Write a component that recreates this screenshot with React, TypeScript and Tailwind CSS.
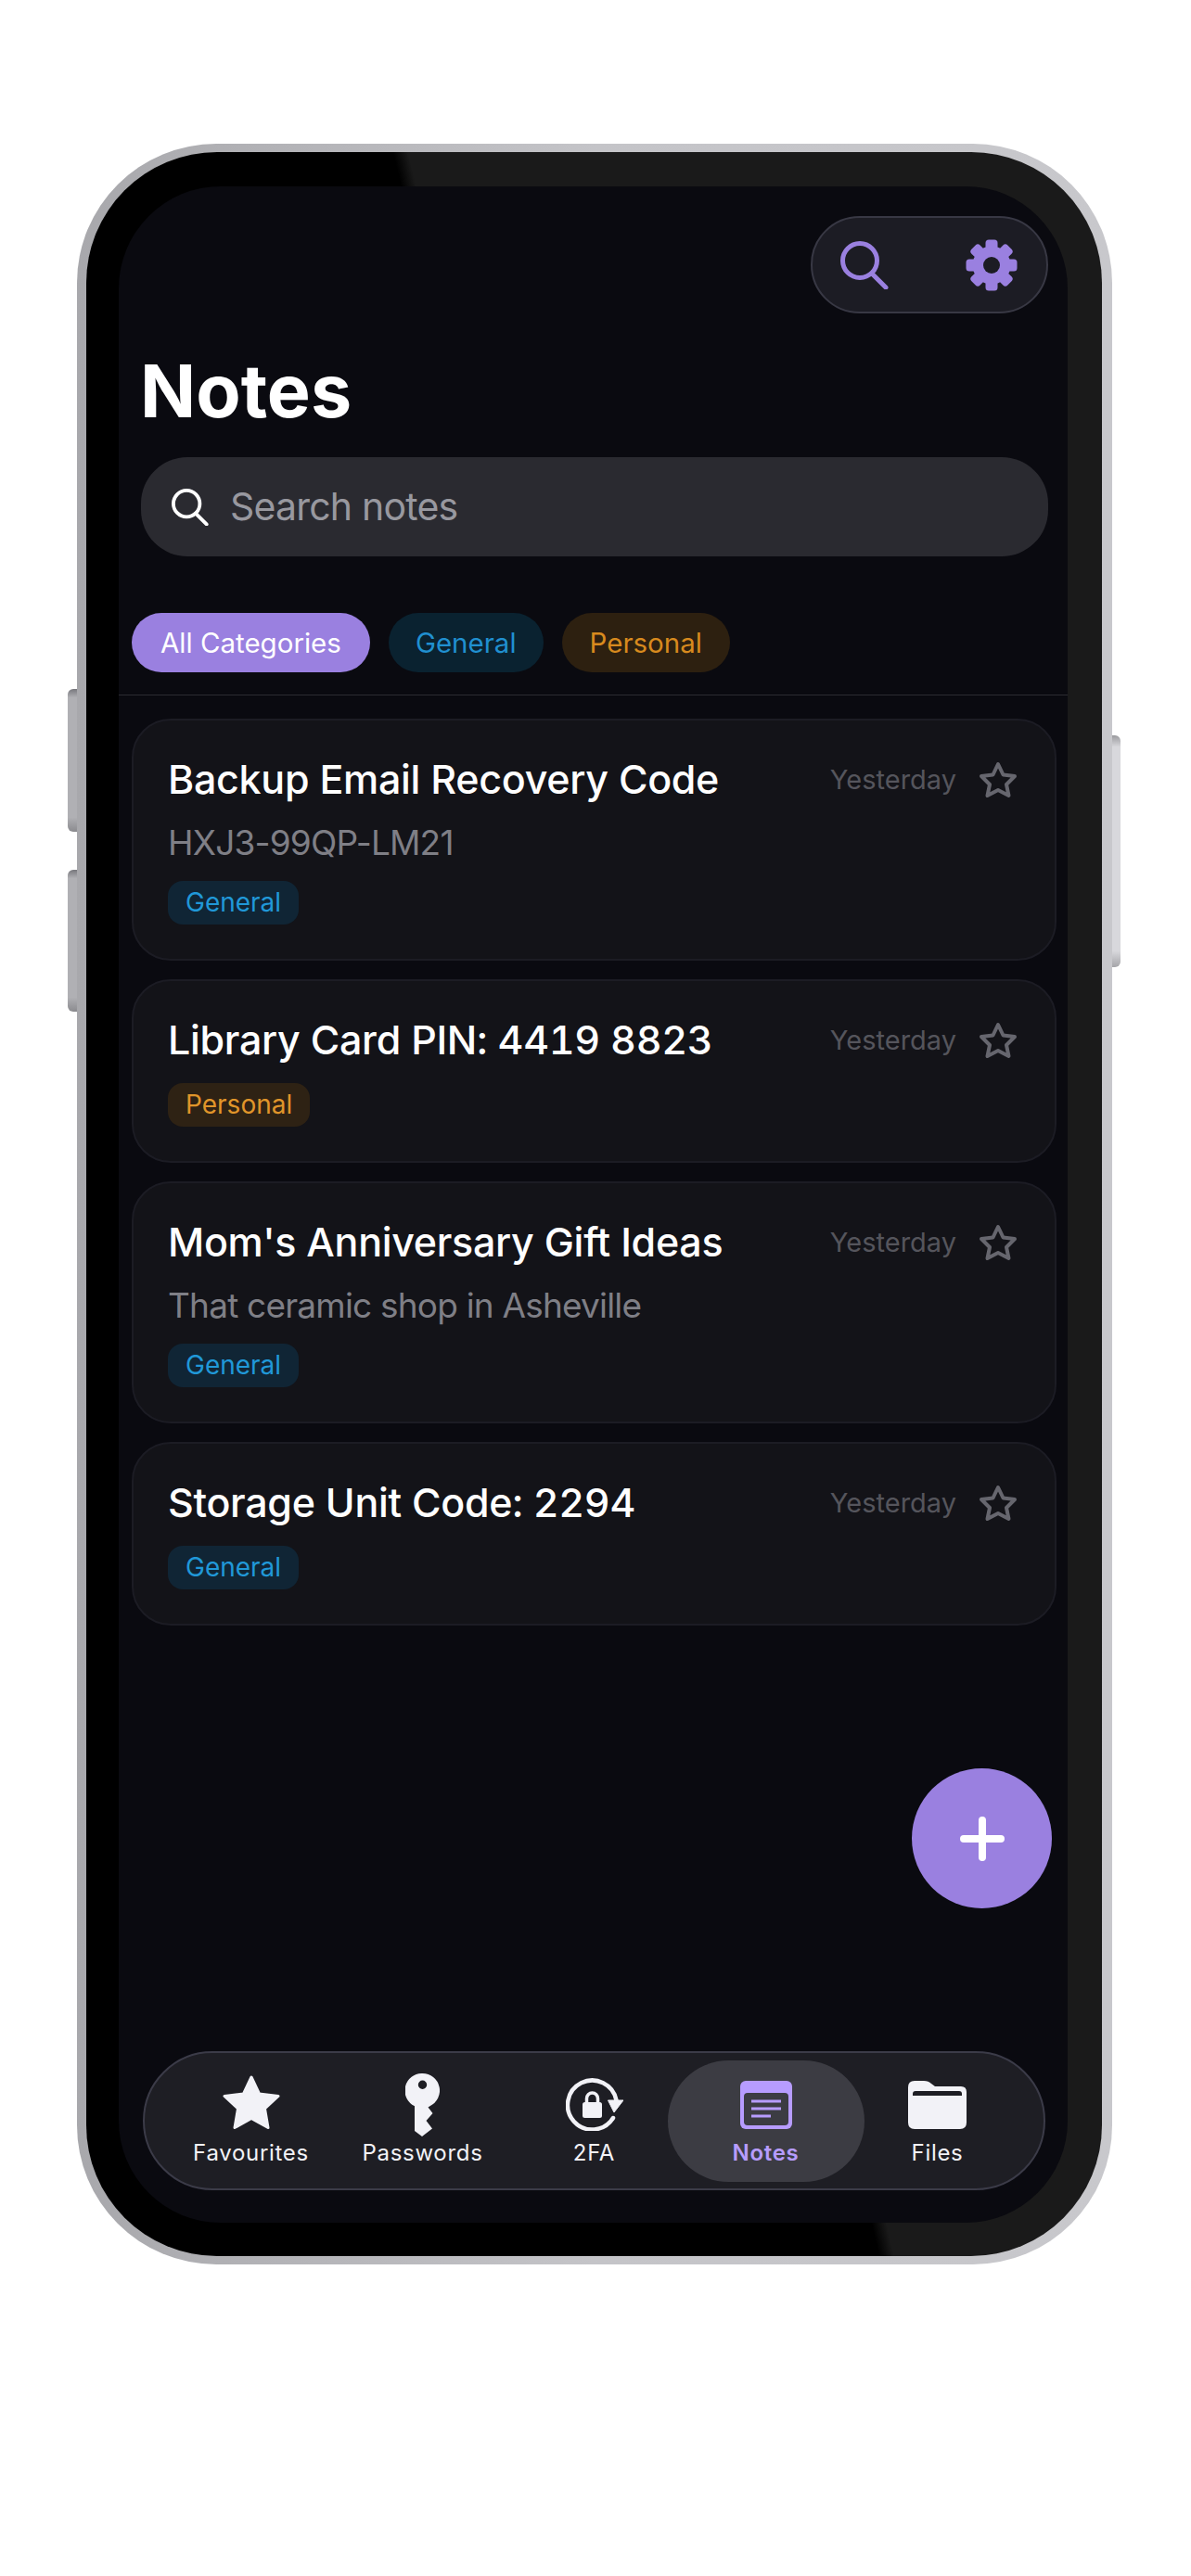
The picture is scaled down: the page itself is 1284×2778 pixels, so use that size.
const notes = [
  { title: "Backup Email Recovery Code", body: "HXJ3-99QP-LM21", tag: "General" },
  { title: "Library Card PIN: 4419 8823", tag: "Personal" },
  { title: "Mom's Anniversary Gift Ideas", body: "That ceramic shop in Asheville", tag: "General" },
  { title: "Storage Unit Code: 2294", tag: "General" },
];

function SearchIcon({ className }: { className: string }) {
  return (
    <svg viewBox="0 0 52 52" fill="none" stroke="currentColor" strokeWidth="5" strokeLinecap="round" className={className}>
      <circle cx="21" cy="21" r="18.5" />
      <path d="M34 35 49 50" />
    </svg>
  );
}

function GearIcon() {
  const angles = [0, 45, 90, 135, 180, 225, 270, 315];
  return (
    <svg viewBox="0 0 56 56" className="size-[56px] text-[#9a80e0]">
      {angles.map((a) => (
        <rect key={a} x="21.5" y="0.5" width="13" height="14" rx="3.5" fill="currentColor" transform={`rotate(${a} 28 28)`} />
      ))}
      <circle cx="28" cy="28" r="20.5" fill="currentColor" />
      <circle cx="28" cy="28" r="9" fill="#1c1c24" />
    </svg>
  );
}

function StarOutline() {
  return (
    <svg viewBox="0 0 42 40" fill="none" stroke="#66666e" strokeWidth="4" strokeLinejoin="round" className="w-[42px] h-[40px] shrink-0">
      <polygon points="21,3 26.5,14.5 39,16 30,25 32.5,37 21,31 9.5,37 12,25 3,16 15.5,14.5" />
    </svg>
  );
}

function StarIcon() {
  return (
    <svg viewBox="0 0 62 59" fill="#f2f2f7" stroke="#f2f2f7" strokeWidth="3" strokeLinejoin="round" className="w-[62px] h-[59px] -mt-[4px]">
      <polygon points="31,2 39.5,20 60,22.5 45.5,36 49,56.5 31,46.5 13,56.5 16.5,36 2,22.5 22.5,20" />
    </svg>
  );
}

function KeyIcon() {
  return (
    <svg viewBox="0 0 37 68" className="w-[37px] h-[68px]">
      <path
        fill="#f2f2f7"
        fillRule="evenodd"
        d="M18.5 0a18.5 18.5 0 0 1 8 35.2l-2 1.3 5 6.5-7 8 6.5 8.5L18 68l-8-6V35.2A18.5 18.5 0 0 1 18.5 0Zm0 7.5a4.7 4.7 0 1 0 0 9.4 4.7 4.7 0 0 0 0-9.4Z"
      />
    </svg>
  );
}

function TwoFaIcon() {
  return (
    <svg viewBox="0 0 62 57" className="w-[62px] h-[57px]">
      <path d="M51 43A26.5 26.5 0 1 1 54.5 24" fill="none" stroke="#f2f2f7" strokeWidth="4.5" strokeLinecap="round" />
      <path d="M45.5 24H62L52 37Z" fill="#f2f2f7" stroke="#f2f2f7" strokeLinejoin="round" />
      <path d="M22.5 27v-5a6 6 0 0 1 12 0v5" fill="none" stroke="#f2f2f7" strokeWidth="3.5" />
      <rect x="18" y="26" width="21" height="17" rx="2.5" fill="#f2f2f7" />
    </svg>
  );
}

function NotesIcon() {
  return (
    <svg viewBox="0 0 56 52" className="w-[56px] h-[52px]">
      <rect width="56" height="52" rx="6" fill="#b79cff" />
      <rect x="4" y="13" width="48" height="35" rx="4" fill="#3c3c43" />
      <path d="M12 22H44M12 30H44M12 38H33" stroke="#b79cff" strokeWidth="3" />
    </svg>
  );
}

function FilesIcon() {
  return (
    <svg viewBox="0 0 63 52" className="w-[63px] h-[52px]">
      <path fill="#f2f2f7" d="M0 7Q0 0 7 0H17Q22 0 25 3L29 6H57Q63 6 63 12V45Q63 52 56 52H7Q0 52 0 45Z" />
      <path fill="#1e1e24" d="M5 16V14Q5 11 8 11H55Q58 11 58 14V16Z" />
    </svg>
  );
}

const navItems = [
  { label: "Favourites", icon: <StarIcon /> },
  { label: "Passwords", icon: <KeyIcon /> },
  { label: "2FA", icon: <TwoFaIcon /> },
  { label: "Notes", icon: <NotesIcon />, active: true },
  { label: "Files", icon: <FilesIcon /> },
];

function NoteCard({ note }: { note: (typeof notes)[number] }) {
  const general = note.tag === "General";
  return (
    <div className="rounded-[42px] border-2 border-[#1c1c24] bg-[#131318] pt-[37px] pb-[37px] pl-[37px] pr-[40px]">
      <div className="flex items-center justify-between">
        <div className="text-[43px] leading-[52px] font-[550] tabular-nums tracking-[-0.3px] text-white">{note.title}</div>
        <div className="flex items-center gap-[24px] pt-[2px]">
          <span className="text-[29px] leading-[36px] text-[#55555c]">Yesterday</span>
          <StarOutline />
        </div>
      </div>
      {note.body && <div className="mt-[21px] text-[37px] leading-[44px] tracking-[-0.8px] text-[#7f7f86]">{note.body}</div>}
      <div
        className={`${note.body ? "mt-[19px]" : "mt-[21px]"} w-fit h-[47px] rounded-[16px] px-[19px] text-[28px] leading-[47px] ${
          general ? "bg-[#102535] text-[#2098d8]" : "bg-[#2e2214] text-[#e0952a]"
        }`}
      >
        {note.tag}
      </div>
    </div>
  );
}

export default function App() {
  return (
    <div className="h-[2778px] bg-white pt-[155px] pl-[83px] font-['Inter',sans-serif]">
      <div className="relative w-[1116px] h-[2287px]">
        <div className="absolute left-[-10px] top-[588px] w-[16px] h-[154px] rounded-l-[6px] bg-[linear-gradient(180deg,#77777c,#b0b0b4_6%,#b0b0b4_90%,#8a8a8e)]" />
        <div className="absolute left-[-10px] top-[783px] w-[16px] h-[153px] rounded-l-[6px] bg-[linear-gradient(180deg,#77777c,#b0b0b4_6%,#b0b0b4_90%,#8a8a8e)]" />
        <div className="absolute right-[-9px] top-[638px] w-[16px] h-[250px] rounded-r-[6px] bg-[linear-gradient(180deg,#9a9a9e,#d8d8dc_5%,#d8d8dc_93%,#a5a5a9)]" />

        <div className="relative h-full rounded-[150px] bg-[linear-gradient(90deg,#a8a8ac,#c4c4c8_50%,#c8c8cc)] pl-[10px] pr-[11px] py-[9px]">
          <div className="h-full rounded-[141px] bg-[linear-gradient(77deg,#000_52.8%,#1a1a1a_53.8%)] pl-[35px] pt-[37px] pr-[37px] pb-[36px]">
            <div className="relative flex h-full flex-col overflow-hidden rounded-[110px] bg-[#0a0a10]">
              <div className="flex justify-end pt-[32px] pr-[21px]">
                <div className="flex h-[105px] w-[256px] items-center justify-between rounded-full border-2 border-[#383844] bg-[#1c1c24] pl-[30px] pr-[31px] text-[#9a80e0]">
                  <SearchIcon className="size-[52px]" />
                  <GearIcon />
                </div>
              </div>

              <h1 className="mt-[35px] pl-[23px] text-[79px] leading-[97px] font-bold text-white">Notes</h1>

              <div className="mt-[23px] ml-[24px] mr-[21px] flex h-[107px] items-center rounded-[50px] bg-[#2a2a30] pl-[33px]">
                <SearchIcon className="size-[40px] text-white" />
                <span className="ml-[23px] text-[41px] tracking-[-0.8px] text-[#98989f]">Search notes</span>
              </div>

              <div className="mt-[61px] flex gap-[20px] pl-[14px]">
                <div className="flex h-[64px] items-center rounded-full bg-[#9a80e0] px-[31px] text-[29.5px] text-white">All Categories</div>
                <div className="flex h-[64px] items-center rounded-full bg-[#0a2230] px-[29px] text-[29.5px] text-[#2090d0]">General</div>
                <div className="flex h-[64px] items-center rounded-full bg-[#2d2010] px-[30px] text-[29.5px] text-[#d88a1e]">Personal</div>
              </div>

              <div className="mt-[24px] h-px bg-[#2c2c32]" />

              <div className="mt-[25px] ml-[14px] mr-[12px] flex flex-col gap-[20px]">
                {notes.map((note) => (
                  <NoteCard key={note.title} note={note} />
                ))}
              </div>

              <button className="absolute right-[17px] top-[1706px] flex size-[151px] items-center justify-center rounded-full bg-[#9a80e0]">
                <svg viewBox="0 0 48 48" stroke="white" strokeWidth="8" strokeLinecap="round" className="size-[48px]">
                  <path d="M24 4V44M4 24H44" />
                </svg>
              </button>

              <nav className="mt-auto mb-[35px] ml-[26px] flex h-[150px] w-[973px] items-center justify-center rounded-full border-2 border-[#3b3b48] bg-[#1e1e24]">
                {navItems.map((item) => (
                  <div key={item.label} className="flex w-[185px] justify-center">
                    <div
                      className={`flex h-[131px] w-[212px] shrink-0 flex-col items-center rounded-full pt-[13px] ${
                        item.active ? "bg-[#3c3c43] text-[#b79cff] font-semibold" : "text-[#f2f2f7] font-normal"
                      }`}
                    >
                      <div className="flex h-[70px] items-center justify-center">{item.icon}</div>
                      <span className="mt-[1px] text-[24px] leading-[32px] tracking-[0.7px]">{item.label}</span>
                    </div>
                  </div>
                ))}
              </nav>
            </div>
          </div>
        </div>
      </div>
    </div>
  );
}
